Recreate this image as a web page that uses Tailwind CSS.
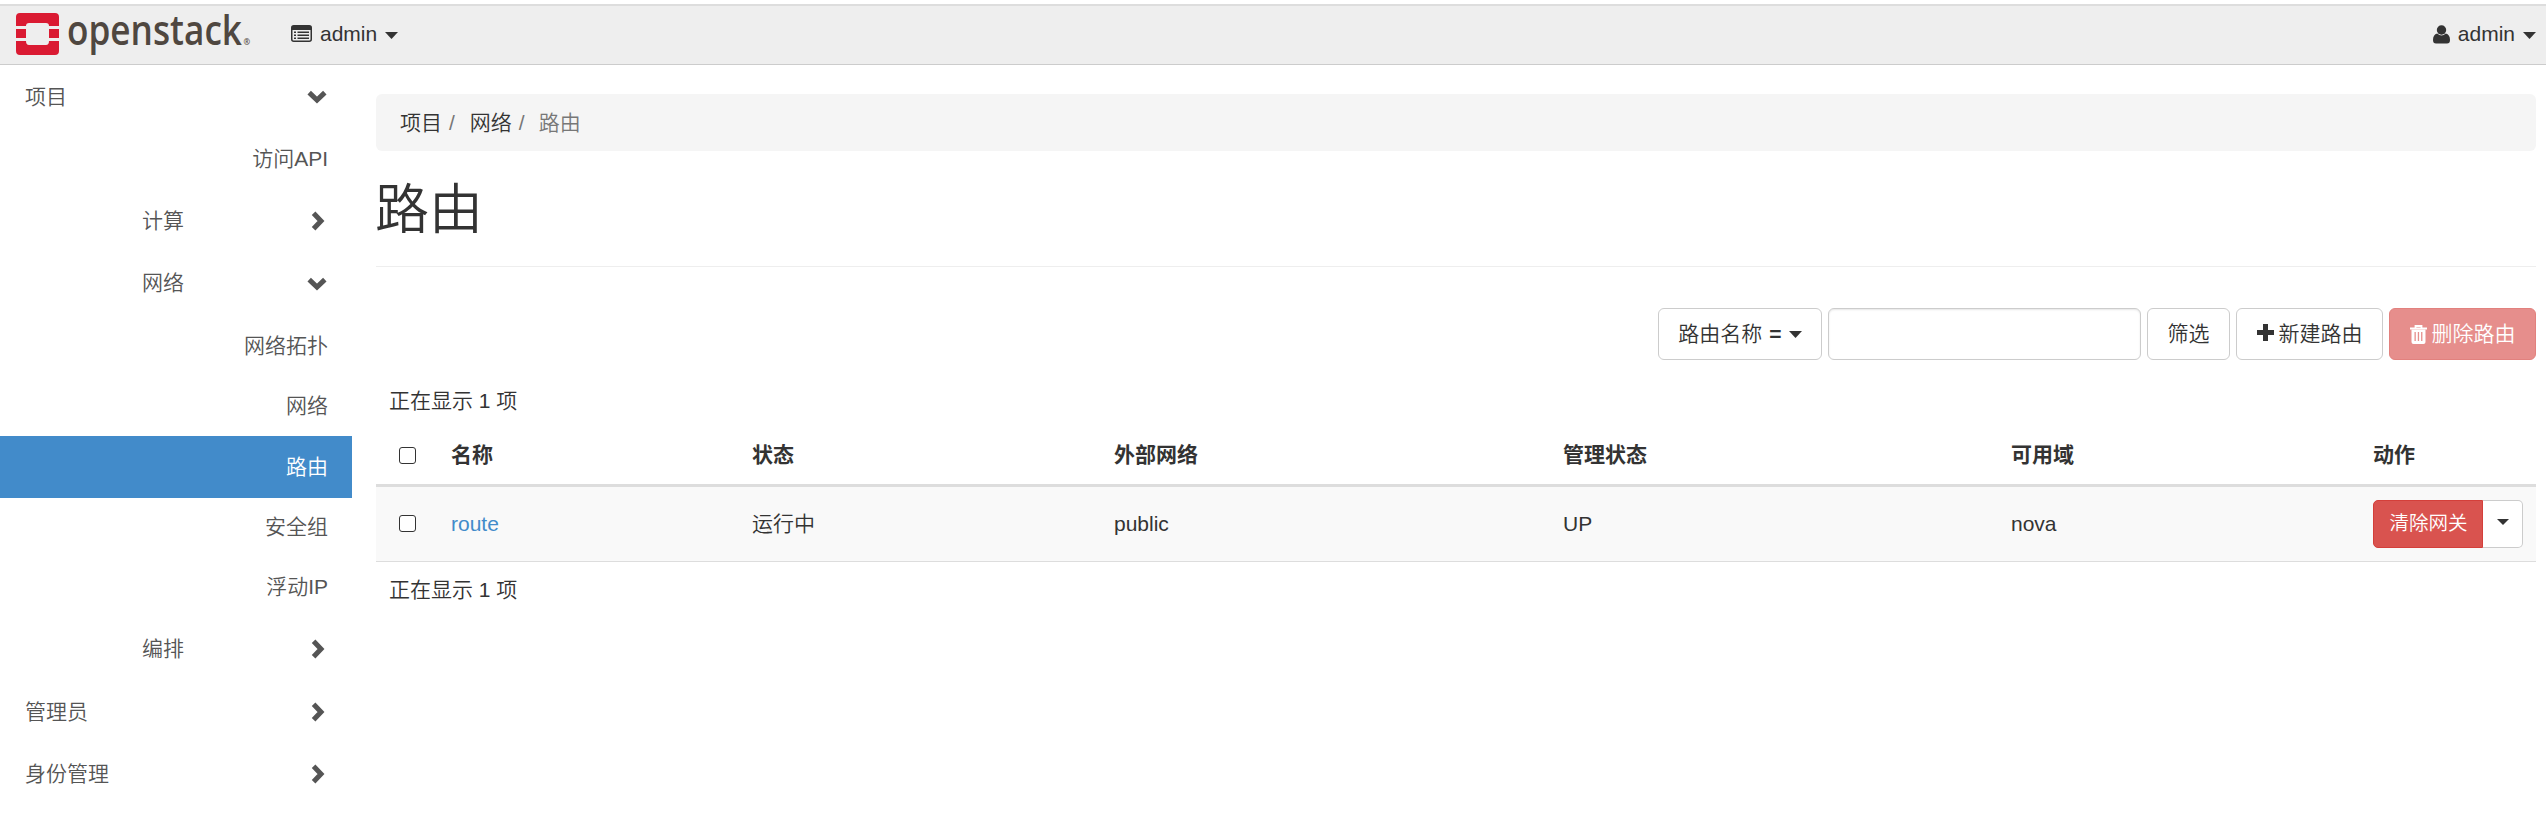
<!DOCTYPE html>
<html lang="zh-CN">
<head>
<meta charset="utf-8">
<title>路由 - OpenStack Dashboard</title>
<script src="https://cdn.jsdelivr.net/npm/@tailwindcss/browser@4"></script>
</head>
<body class="bg-white text-[#333] text-[21px] leading-[30px] font-[350] font-['Liberation_Sans','Noto_Sans_CJK_SC',sans-serif] overflow-hidden">
<svg class="hidden">
  <symbol id="down" viewBox="0 0 20 14"><path d="M2.200 2.600 10 10l7.800-7.400" fill="none" stroke="#555" stroke-width="5"/></symbol>
  <symbol id="right" viewBox="0 0 14 20"><path d="M2.600 2.200 10 10l-7.400 7.800" fill="none" stroke="#555" stroke-width="5"/></symbol>
  <symbol id="caret" viewBox="0 0 12 6" preserveAspectRatio="none"><path d="M0 0h12L6 6z" fill="#333"/></symbol>
</svg>

<header class="mt-1 h-[61px] border-t-2 border-t-[#ddd] border-b border-b-[#ccc] bg-[#eee] flex justify-between">
  <div class="flex">
    <svg class="w-[291px] h-[58px] shrink-0 overflow-visible" viewBox="0 6 291 58">
      <g fill="#da1a32">
        <path d="M16 26V17q0-4 4-4h35q4 0 4 4v9H49q0-3-3-3H29q-3 0-3 3z"/>
        <path d="M16 29h10v9H16zM49 29h10v9H49z"/>
        <path d="M16 41h10q0 4 3 4h17q3 0 3-4h10v10q0 4-4 4H20q-4 0-4-4z"/>
      </g>
      <text x="67" y="45" font-family="Open Sans" font-weight="600" font-size="41" textLength="175" lengthAdjust="spacingAndGlyphs" fill="#4f4740">openstack</text>
      <text x="243.500" y="45" font-family="Open Sans" font-weight="600" font-size="8" fill="#4f4740">®</text>
    </svg>
    <div class="flex items-center pb-0.5">
      <svg class="w-[21px] h-[17px] mb-0.5" viewBox="0 0 21 17"><rect x=".75" y=".75" width="19.500" height="15.500" rx="2" fill="none" stroke="#333" stroke-width="1.500"/><path d="M1 1h19v4H1z" fill="#333"/><path d="M3 7.200h2M3 10.200h2M3 13.200h2M6.500 7.200H18M6.500 10.200H18M6.500 13.200H18" stroke="#333" stroke-width="1.500"/></svg>
      <span class="ml-2">admin</span>
      <svg class="w-[13px] h-[7px] ml-2 mt-0.5"><use href="#caret"/></svg>
    </div>
  </div>
  <div class="flex items-center pr-[10px] pb-0.5">
    <svg class="w-[17px] h-[19px]" viewBox="0 0 17 19" fill="#333"><circle cx="8.500" cy="5" r="4.700"/><path d="M4.200 8.500Q8.500 12.500 12.800 8.500 17 9.500 17 15q0 3.500-3 3.500H3Q0 18.500 0 15 0 9.500 4.200 8.500z"/></svg>
    <span class="ml-2">admin</span>
    <svg class="w-[13px] h-[7px] ml-2 mt-0.5"><use href="#caret"/></svg>
  </div>
</header>

<div class="flex">
  <nav class="w-[352px] mr-6 pt-[3px] shrink-0 text-[#555] flex flex-col">
    <div class="h-[58px] pl-[25px] pr-[25px] flex items-center justify-between"><span>项目</span><svg class="w-5 h-3.5"><use href="#down"/></svg></div>
    <div class="h-[65px] pr-6 flex items-center justify-end">访问API</div>
    <div class="h-[59px] pl-[142px] pr-[27px] flex items-center justify-between"><span>计算</span><svg class="w-3.5 h-5"><use href="#right"/></svg></div>
    <div class="h-[66px] pl-[142px] pr-[25px] flex items-center justify-between"><span>网络</span><svg class="w-5 h-3.5 mt-0.5"><use href="#down"/></svg></div>
    <div class="h-[60px] pr-6 flex items-center justify-end">网络拓扑</div>
    <div class="h-[60px] pr-6 flex items-center justify-end">网络</div>
    <div class="h-[62px] pr-6 flex items-center justify-end bg-[#428bca] text-white">路由</div>
    <div class="h-[58px] pr-6 flex items-center justify-end">安全组</div>
    <div class="h-[62px] pr-6 flex items-center justify-end">浮动IP</div>
    <div class="h-[62px] pl-[142px] pr-[27px] flex items-center justify-between"><span>编排</span><svg class="w-3.5 h-5"><use href="#right"/></svg></div>
    <div class="h-[64px] pl-[25px] pr-[27px] flex items-center justify-between"><span>管理员</span><svg class="w-3.5 h-5"><use href="#right"/></svg></div>
    <div class="h-[60px] pl-[25px] pr-[27px] flex items-center justify-between"><span>身份管理</span><svg class="w-3.5 h-5"><use href="#right"/></svg></div>
  </nav>

  <main class="w-[2160px] pt-[29px]">
    <div class="h-[57px] rounded-md bg-[#f5f5f5] pl-6 pt-px flex items-center text-[#777]">
      <span class="text-[#333]">项目</span><span class="pl-[7px] pr-[15px]">/</span><span class="text-[#333]">网络</span><span class="pl-[7px] pr-[14px]">/</span><span>路由</span>
    </div>
    <h1 class="h-[116px] pt-[3px] -indent-px border-b border-[#eee] text-[54px] flex items-center">路由</h1>
    <div class="mt-[41px] h-[52px] flex justify-end gap-1.5">
      <button class="w-[164px] border border-[#ccc] rounded-md flex items-center justify-center"><span>路由名称</span><b class="ml-[7px] mr-[7px] font-bold">=</b><svg class="w-[13px] h-[7px]"><use href="#caret"/></svg></button>
      <input class="w-[313px] border border-[#ccc] rounded-md shadow-[inset_0_1px_2px_rgba(0,0,0,0.1)]">
      <button class="w-[83px] border border-[#ccc] rounded-md">筛选</button>
      <button class="w-[147px] border border-[#ccc] rounded-md flex items-center justify-center gap-[5px]"><svg class="w-[17px] h-[17px] mb-1" viewBox="0 0 17 17"><path d="M8.500 0v17M0 8.500h17" stroke="#333" stroke-width="5"/></svg>新建路由</button>
      <button class="w-[147px] border border-[#d43f3a] bg-[#d9534f] text-white opacity-65 rounded-md flex items-center justify-center gap-[5px]"><svg class="w-[17px] h-[19px]" viewBox="0 0 17 19"><path d="M5.500 3V1h6v2M0 3.500h17" fill="none" stroke="#fff" stroke-width="1.800"/><path d="M1.500 4.500h14V17q0 2-2 2h-10q-2 0-2-2zM4.500 7v9h1.300V7zM7.800 7v9h1.300V7zM11.100 7v9h1.300V7z" fill="#fff" fill-rule="evenodd"/></svg>删除路由</button>
    </div>
    <div class="mt-[26px] pl-[13px] h-[30px]">正在显示 1 项</div>
    <table class="mt-[11px] w-[2160px] table-fixed border-collapse text-left">
      <colgroup><col class="w-[63px]"><col class="w-[301px]"><col class="w-[362px]"><col class="w-[449px]"><col class="w-[448px]"><col class="w-[362px]"><col class="w-[175px]"></colgroup>
      <thead>
        <tr class="h-[58px] border-b-3 border-[#ddd]">
          <th class="pl-[23px]"><input type="checkbox" class="block appearance-none size-[17px] bg-white border-[1.500px] border-[#333] rounded-[3px]"></th>
          <th class="pl-3">名称</th><th class="pl-3">状态</th><th class="pl-3">外部网络</th><th class="pl-3">管理状态</th><th class="pl-3">可用域</th><th class="pl-3">动作</th>
        </tr>
      </thead>
      <tbody>
        <tr class="h-[76px] bg-[#f9f9f9] border-b border-[#ddd]">
          <td class="pl-[23px]"><input type="checkbox" class="block appearance-none size-[17px] bg-white border-[1.500px] border-[#333] rounded-[3px]"></td>
          <td class="pl-3 text-[#428bca]">route</td><td class="pl-3">运行中</td><td class="pl-3">public</td><td class="pl-3">UP</td><td class="pl-3">nova</td>
          <td class="pl-3"><div class="flex h-12 text-[19.500px]"><button class="w-[110px] pl-px pb-0.5 border border-[#d43f3a] bg-[#d9534f] text-white rounded-l-[5px]">清除网关</button><button class="w-10 bg-white border border-l-0 border-[#ccc] rounded-r-[5px] flex items-center justify-center"><svg class="w-3 h-1.5 mb-1"><use href="#caret"/></svg></button></div></td>
        </tr>
      </tbody>
    </table>
    <div class="mt-[13px] pl-[13px] h-[30px]">正在显示 1 项</div>
  </main>
</div>
</body>
</html>
